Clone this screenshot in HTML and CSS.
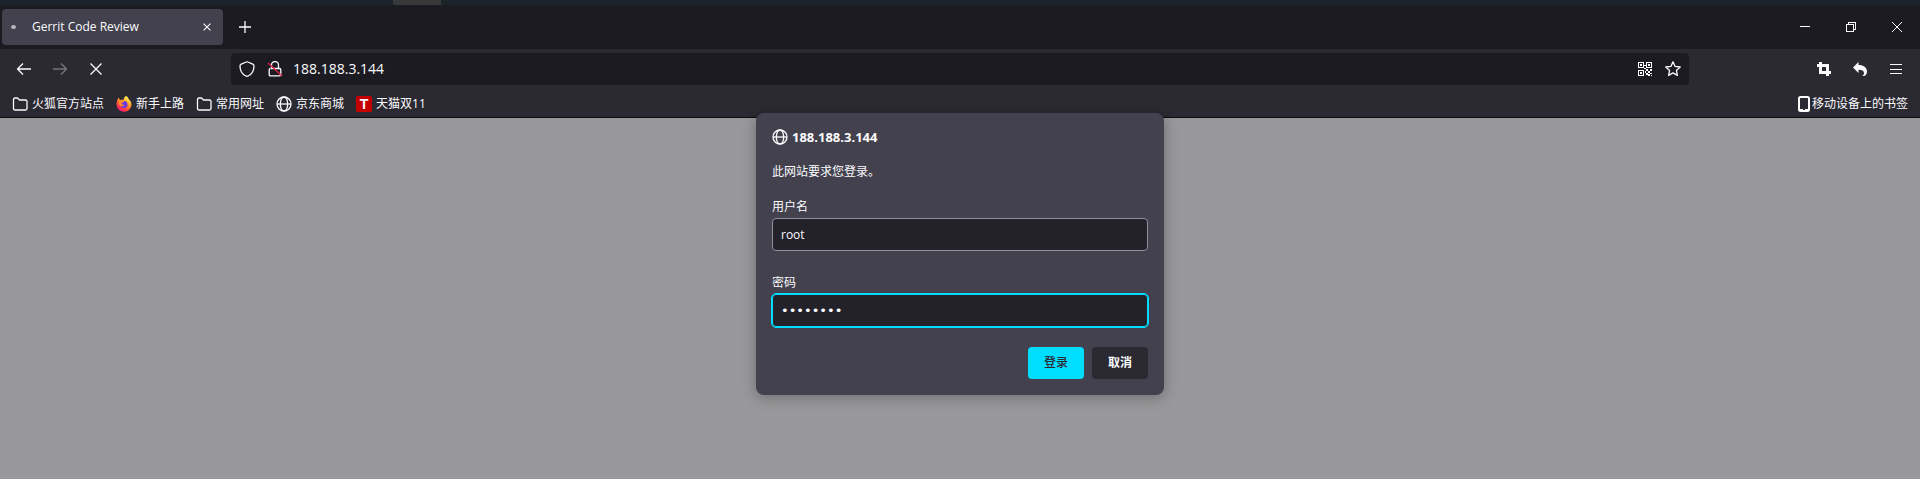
FILE: index.html
```html
<!DOCTYPE html>
<html lang="zh-CN">
<head>
<meta charset="utf-8">
<title>Gerrit Code Review</title>
<link rel="stylesheet" href="styles.css">
</head>
<body>
<svg class="defs" aria-hidden="true">
  <symbol id="folder" viewBox="0 0 16 16"><path d="M1.5 12.5v-9q0-1.5 1.500-1.500h2.500l2 2h6q1.500 0 1.500 1.500v7q0 1.500-1.500 1.500h-10.500q-1.500 0-1.500-1.500z"/></symbol>
  <symbol id="globe" viewBox="0 0 16 16"><circle cx="8" cy="8" r="7"/><ellipse cx="8" cy="8" rx="3.700" ry="7"/><path d="M1 8h14"/></symbol>
  <symbol id="close" viewBox="0 0 16 16"><path d="M2.500 2.500l11 11M13.500 2.500l-11 11"/></symbol>
</svg>
<div class="desktop"><span class="desktop-mark"></span></div>
<header class="browser">
  <div class="tabs">
    <div class="tab">
      <span class="loading"></span>
      <span class="tab-title">Gerrit Code Review</span>
      <button class="tab-close" aria-label="关闭标签页"><svg class="icon small"><use href="#close"/></svg></button>
    </div>
    <button class="new-tab" aria-label="新标签页"><svg class="icon" viewBox="0 0 16 16"><path d="M8 2v12M2 8h12"/></svg></button>
    <div class="window-buttons">
      <button aria-label="最小化"><svg class="icon crisp" viewBox="0 0 16 16"><path d="M3 7.500h10"/></svg></button>
      <button aria-label="还原"><svg class="icon crisp" viewBox="0 0 16 16"><path d="M3.500 5.500h7v7h-7zM5.500 5v-1.500h7v7h-2"/></svg></button>
      <button aria-label="关闭"><svg class="icon thin" viewBox="0 0 16 16"><path d="M3 3l10 10M13 3l-10 10"/></svg></button>
    </div>
  </div>
  <nav class="toolbar">
    <div class="side">
      <button aria-label="后退"><svg class="icon" viewBox="0 0 16 16"><path d="M15 8h-13.500M7 2.500l-5.500 5.500l5.500 5.500"/></svg></button>
      <button aria-label="前进" disabled><svg class="icon" viewBox="0 0 16 16"><path d="M1 8h13.500M9 2.500l5.500 5.500l-5.500 5.500"/></svg></button>
      <button aria-label="停止"><svg class="icon"><use href="#close"/></svg></button>
    </div>
    <div class="address">
      <button aria-label="跟踪保护"><svg class="icon" viewBox="0 0 16 16"><path d="M8 .8q.4 0 .8.2l5 2.200q1.200.5 1.200 1.800c0 4.500-1.800 8-5.800 10q-1.200.5-2.400 0c-4-2-5.800-5.500-5.800-10q0-1.300 1.200-1.800l5-2.200q.4-.2.800-.2z"/></svg></button>
      <button aria-label="连接不安全"><svg class="icon" viewBox="0 0 16 16"><path d="M4.500 7v-3a3.500 3.500 0 0 1 7 0v3M4 7.500h8.500q1.300 0 1.300 1.300v4.700q0 1.300-1.300 1.300h-9q-1.300 0-1.300-1.300v-4.700q0-1.300 1.300-1.300"/><path class="strike" d="M1 2l14 13"/></svg></button>
      <input class="url" type="text" value="188.188.3.144" aria-label="网址">
      <button aria-label="二维码"><svg class="icon solid crisp" viewBox="0 0 16 16"><path fill-rule="evenodd" d="M1 1h6v6H1zM2 2v4h4V2zM9 1h6v6H9zM10 2v4h4V2zM1 9h6v6H1zM2 10v4h4v-4zM3 3h2v2H3zM11 3h2v2h-2zM3 11h2v2H3zM7 4h2v1H7zM7 7h2v1H7zM9 8h2v2H9zM13 8h2v2h-2zM11 10h2v2h-2zM9 12h2v2H9zM13 12h2v1h-2zM8 10h1v2H8zM11 13h2v2h-2zM14 14h1v1h-1z"/></svg></button>
      <button aria-label="收藏"><svg class="icon" viewBox="0 0 16 16"><path d="M8 .8l2.100 4.600l5.100.6l-3.800 3.400l1 5l-4.400-2.500l-4.400 2.500l1-5l-3.800-3.400l5.100-.6z"/></svg></button>
    </div>
    <div class="side end">
      <button aria-label="截图"><svg class="icon crop" viewBox="0 0 16 16"><path d="M4.500 1v10.500H15M1 4.500h10.500V15"/></svg></button>
      <button aria-label="撤销"><svg class="icon solid" viewBox="0 0 16 16"><path d="M6.500 1v3c5 0 8.500 2.500 8.500 6.500c0 2-1 3.500-2.600 4.500h-2c1.200-1 1.600-2 1.600-3c0-2-2-3.200-5.500-3.200v3.200L1 6.500z"/></svg></button>
      <button aria-label="菜单"><svg class="icon crisp" viewBox="0 0 16 16"><path d="M2 3.500h12M2 8.500h12M2 12.500h12"/></svg></button>
    </div>
  </nav>
  <div class="bookmarks">
    <a href="#"><svg class="icon"><use href="#folder"/></svg>火狐官方站点</a>
    <a href="#"><svg class="fox" viewBox="0 0 16 16">
      <defs><linearGradient id="flame" x1=".8" y1="0" x2=".2" y2="1"><stop offset=".1" stop-color="#fff14a"/><stop offset=".45" stop-color="#ff8a28"/><stop offset=".75" stop-color="#ff3647"/><stop offset="1" stop-color="#e31587"/></linearGradient></defs>
      <path fill="url(#flame)" d="M10 0c2 1 2.500 2.500 3 3.500c2 1.500 2.800 4 2.300 6.500A7.500 7.500 0 0 1 .5 8.500C.4 6 1.200 4 2.700 1.500L4 4c1.500-.5 2.500-.3 3.500 0C7.500 2.500 8.500 1 10 0z"/>
      <circle cx="8" cy="8.500" r="3.500" fill="#6a3be0"/><path fill="#ff8a28" d="M2.500 4.500c2-1 3.500-.5 5.500.8c-.2 1.200-1.500 1.400-2.500 2c0 1.200 1.500 2 3 1.200c-1 2.500-4.500 2.500-5.500-.5z"/></svg>新手上路</a>
    <a href="#"><svg class="icon"><use href="#folder"/></svg>常用网址</a>
    <a href="#"><svg class="icon"><use href="#globe"/></svg>京东商城</a>
    <a href="#"><span class="tmall">T</span>天猫双11</a>
    <a class="mobile" href="#"><svg class="phone" viewBox="0 0 12 16"><rect x="1" y="1" width="10" height="14" rx="1.500"/><path d="M1 14h4M7 14h4"/></svg>移动设备上的书签</a>
  </div>
</header>
<main class="page">
  <form class="dialog">
    <h1><svg class="icon"><use href="#globe"/></svg>188.188.3.144</h1>
    <p>此网站要求您登录。</p>
    <label for="user">用户名</label>
    <input id="user" type="text" value="root">
    <label for="pass">密码</label>
    <input id="pass" class="focused" type="password" value="password">
    <div class="actions">
      <button class="primary" type="button">登录</button>
      <button type="button">取消</button>
    </div>
  </form>
</main>
</body>
</html>
```
FILE: styles.css
```css
* { box-sizing: border-box; }
body {
  margin: 0;
  min-height: 100vh;
  display: flex;
  flex-direction: column;
  background: #98989a;
  color: #fbfbfe;
  font: 12px/16px "Open Sans", "Noto Sans CJK SC", sans-serif;
}
button {
  display: flex;
  align-items: center;
  justify-content: center;
  padding: 0;
  border: 0;
  background: none;
  color: inherit;
  font: inherit;
}
.defs { display: none; }
.icon {
  flex: none;
  width: 16px;
  height: 16px;
  fill: none;
  stroke: currentColor;
  stroke-width: 1.3;
  stroke-linejoin: round;
}
.thin { stroke-width: 1; }
.small { width: 10px; height: 10px; stroke-width: 1.8; }
.solid { fill: currentColor; stroke: none; }
.crisp { shape-rendering: crispEdges; stroke-width: 1; stroke-linejoin: miter; }
.solid.crisp { stroke: none; }
.crop { stroke-width: 3; stroke-linejoin: miter; }
.strike { stroke: #e2204c; }

.desktop { height: 5px; padding-left: 393px; background: #1b242a; }
.desktop-mark { display: block; width: 48px; height: 5px; background: #38393b; }

.browser { background: #2b2a33; border-bottom: 1px solid #0c0c0d; }
.tabs { display: flex; align-items: center; height: 44px; padding-left: 2px; background: #1c1b22; }
.tab {
  display: flex;
  align-items: center;
  width: 221px;
  height: 36px;
  padding: 0 8px;
  border-radius: 4px;
  background: #42414d;
}
.loading { width: 5px; height: 4px; margin-right: 16px; margin-left: 1px; border-radius: 50%; background: #b8b8bd; }
.tab-title { flex: 1; }
.tab-close { width: 16px; height: 24px; }
.new-tab { width: 44px; height: 36px; }
.window-buttons { display: flex; margin-left: auto; }
.window-buttons button { width: 46px; height: 44px; }

.toolbar { display: flex; align-items: center; height: 40px; }
.side { display: flex; width: 231px; padding: 0 6px; }
.side.end { justify-content: flex-end; }
.side button { width: 36px; height: 32px; }
.side button:disabled { color: #77767e; }
.address {
  flex: 1;
  display: flex;
  align-items: center;
  height: 32px;
  padding: 0 2px;
  border-radius: 4px;
  background: #1c1b22;
}
.address button { width: 28px; height: 32px; }
.url {
  flex: 1;
  min-width: 0;
  padding: 0 4px;
  border: 0;
  background: none;
  color: inherit;
  font: 14px/20px "Open Sans", sans-serif;
}

.bookmarks { display: flex; align-items: center; gap: 12px; height: 28px; padding: 1px 12px 0; }
.bookmarks a { display: flex; align-items: center; gap: 4px; color: inherit; text-decoration: none; }
.fox { width: 16px; height: 16px; }
.tmall {
  width: 16px;
  height: 16px;
  border-radius: 2px;
  background: #c40000;
  font: bold 14px/16px "Liberation Sans", sans-serif;
  text-align: center;
}
.bookmarks .mobile { gap: 2px; margin-left: auto; }
.phone { width: 12px; height: 16px; fill: none; stroke: currentColor; stroke-width: 2; }

.page { flex: 1; }
.dialog {
  position: relative;
  width: 408px;
  margin: -5px auto 0;
  padding: 16px;
  border-radius: 8px;
  background: #42414d;
  box-shadow: 0 2px 14px rgba(0, 0, 0, 0.3);
}
.dialog h1 { display: flex; align-items: center; gap: 4px; height: 16px; margin: 0 0 19px; font-size: 13px; }
.dialog p { margin: 0 0 18px; }
.dialog label { display: block; height: 20px; padding-top: 1px; }
.dialog input {
  display: block;
  width: 100%;
  height: 33px;
  margin-bottom: 23px;
  padding: 0 8px;
  border: 1px solid #8f8f9d;
  border-radius: 4px;
  background: #23222b;
  color: inherit;
  font: inherit;
}
.dialog .focused {
  margin-bottom: 20px;
  border-color: #00ddff;
  outline: 1px solid #00ddff;
  font: 13px/16px "DejaVu Sans", sans-serif;
}
.actions { display: flex; justify-content: flex-end; gap: 8px; }
.actions button { width: 56px; height: 32px; border-radius: 4px; background: #2b2a33; font-weight: bold; }
.actions .primary { background: #00ddff; color: #2b2a33; font-weight: 500; }
```
